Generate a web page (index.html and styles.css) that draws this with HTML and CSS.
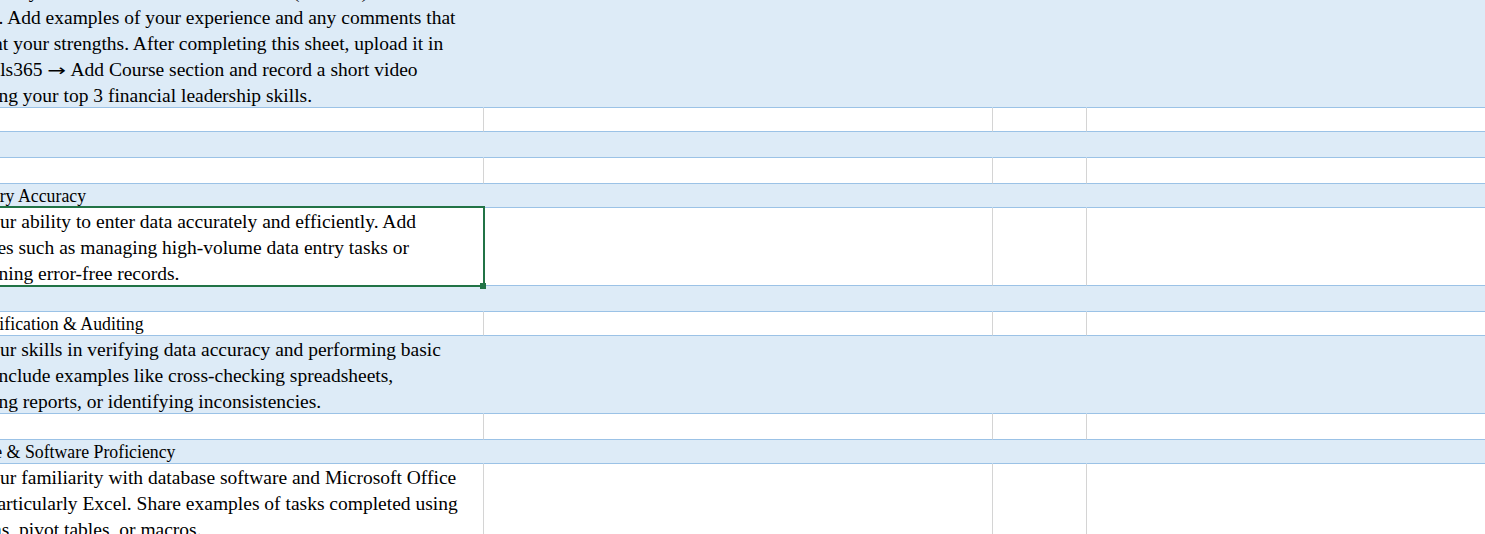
FILE: index.html
```html
<!DOCTYPE html>
<html lang="en">
<head>
<meta charset="utf-8">
<title>Skills Self-Assessment</title>
<link rel="stylesheet" href="styles.css">
</head>
<body>
<div class="sheet">
  <!-- row 1 -->
  <div class="c b"><div class="t">Please rate yourself on each skill from 1 to 5 (5 = best) in the Score<br>column. Add examples of your experience and any comments that<br>spotlight your strengths. After completing this sheet, upload it in<br>the Skills365 <span class="arrow">→</span> Add Course section and record a short video<br>reviewing your top 3 financial leadership skills.</div></div>
  <div class="c b"></div><div class="c b"></div><div class="c b"></div>
  <!-- row 2 -->
  <div class="c"></div><div class="c"></div><div class="c"></div><div class="c"></div>
  <!-- row 3 -->
  <div class="c b"></div><div class="c b"></div><div class="c b"></div><div class="c b"></div>
  <!-- row 4 -->
  <div class="c"></div><div class="c"></div><div class="c"></div><div class="c"></div>
  <!-- row 5 -->
  <div class="c b"><div class="t head">Data Entry Accuracy</div></div>
  <div class="c b"></div><div class="c b"></div><div class="c b"></div>
  <!-- row 6 -->
  <div class="c selected"><div class="t">Rate your ability to enter data accurately and efficiently. Add<br>examples such as managing high-volume data entry tasks or<br>maintaining error-free records.</div></div>
  <div class="c"></div><div class="c"></div><div class="c"></div>
  <!-- row 7 -->
  <div class="c b"></div><div class="c b"></div><div class="c b"></div><div class="c b"></div>
  <!-- row 8 -->
  <div class="c"><div class="t head">Data Verification &amp; Auditing</div></div>
  <div class="c"></div><div class="c"></div><div class="c"></div>
  <!-- row 9 -->
  <div class="c b"><div class="t">Rate your skills in verifying data accuracy and performing basic<br>totals. Include examples like cross-checking spreadsheets,<br>reviewing reports, or identifying inconsistencies.</div></div>
  <div class="c b"></div><div class="c b"></div><div class="c b"></div>
  <!-- row 10 -->
  <div class="c"></div><div class="c"></div><div class="c"></div><div class="c"></div>
  <!-- row 11 -->
  <div class="c b"><div class="t head">Database &amp; Software Proficiency</div></div>
  <div class="c b"></div><div class="c b"></div><div class="c b"></div>
  <!-- row 12 -->
  <div class="c"><div class="t">Rate your familiarity with database software and Microsoft Office<br>tools, particularly Excel. Share examples of tasks completed using<br>formulas, pivot tables, or macros.</div></div>
  <div class="c"></div><div class="c"></div><div class="c"></div>
</div>
</body>
</html>
```
FILE: styles.css
```css
html, body {
  margin: 0;
  padding: 0;
  background: #ffffff;
  overflow: hidden;
}

body {
  width: 1485px;
  height: 534px;
}

.sheet {
  display: grid;
  grid-template-columns: 547px 509px 94px 600px;
  grid-template-rows: 132px 24px 26px 26px 24px 78px 26px 24px 78px 26px 24px 78px;
  margin: -24px 0 0 -63px;
  font-family: "Liberation Serif", "Times New Roman", serif;
  font-size: 19.5px;
  line-height: 26px;
  color: #000000;
}

.c {
  box-sizing: border-box;
  display: flex;
  flex-direction: column;
  justify-content: flex-end;
  overflow: hidden;
  padding-left: 3px;
  white-space: nowrap;
  background: #ffffff;
  border-right: 1px solid #d4d4d4;
  border-bottom: 1px solid #9bc2e6;
}

.c.b {
  background: #ddebf7;
  border-right-color: #ddebf7;
}

.t {
  flex: none;
  margin-bottom: -2px;
}

.t.head {
  font-size: 17.8px;
  text-indent: -3px;
}

.arrow {
  display: inline-block;
  font-family: "DejaVu Sans", sans-serif;
  font-size: 16px;
  line-height: 12px;
  transform: scaleX(1.4);
  margin: 0 3px;
}

.c.selected {
  position: relative;
  overflow: visible;
  z-index: 1;
}

.c.selected::after {
  content: "";
  position: absolute;
  top: -2px;
  left: -2px;
  right: -2px;
  bottom: -2px;
  border: 2px solid #217346;
  box-sizing: border-box;
}

.c.selected::before {
  content: "";
  position: absolute;
  right: -3px;
  bottom: -4px;
  width: 6px;
  height: 6px;
  background: #217346;
  z-index: 2;
}
```
